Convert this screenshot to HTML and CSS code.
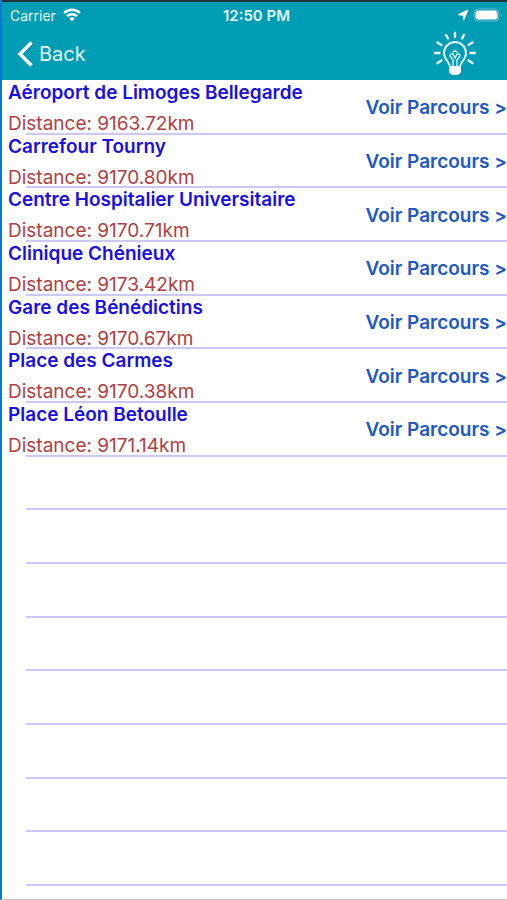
FILE: index.html
```html
<!DOCTYPE html>
<html lang="fr">
<head>
<meta charset="utf-8">
<meta name="viewport" content="width=device-width, initial-scale=1">
<title>Parcours</title>
<link rel="stylesheet" href="styles.css">
</head>
<body>
<header class="top">
  <div class="status">
    <div class="carrier">
      <span>Carrier</span>
      <svg width="20" height="14" viewBox="0 0 18 14" fill="none" stroke="#fff" stroke-width="2.4" aria-hidden="true">
        <path d="M1 5a11.500 11.500 0 0 1 16 0M4 8.200a7.200 7.200 0 0 1 10 0"/>
        <path d="M9 13.500 6.200 10.600a4 4 0 0 1 5.600 0z" fill="#fff" stroke="none"/>
      </svg>
    </div>
    <time class="clock">12:50 PM</time>
    <div class="indicators">
      <svg width="12" height="12" viewBox="0 0 12 12" fill="#fff" stroke="#fff" stroke-linejoin="round" aria-hidden="true"><path d="M11 1 6.700 11 6.200 6.200 1 5.700z"/></svg>
      <svg width="30" height="14" viewBox="0 0 30 14" aria-hidden="true">
        <rect x="1" y="1" width="25" height="12" rx="4" fill="none" stroke="#5fbecd"/>
        <rect x="2.500" y="2.500" width="22" height="9" rx="2.500" fill="#fff"/>
        <path d="M28 5q1.500 2 0 4z" fill="#7fcbd8"/>
      </svg>
    </div>
  </div>
  <nav class="bar">
    <a class="back" href="#">
      <svg width="16" height="26" viewBox="0 0 16 26" fill="none" stroke="#fff" stroke-width="3.400" aria-hidden="true"><path d="M14.500 1.500 3 13l11.500 11.500"/></svg>
      <span>Back</span>
    </a>
    <button class="bulb" type="button" aria-label="Lumière">
      <svg width="44" height="46" viewBox="0 0 44 46" fill="none" stroke="#e6f8fb" stroke-width="2" stroke-linecap="round" aria-hidden="true">
        <path d="M17 36c0-5-6-7-6-14a11 11 0 0 1 22 0c0 7-6 9-6 14z"/>
        <path d="M20 35v-6l-3-4q0-3 3-2l2 4 2-4q3-1 3 2l-3 4v6M20 21q2-2 4 0" stroke-width="1.300"/>
        <path d="M22 2v4M13 4l2 3.500M31 4l-2 3.500M4.500 11.500l4 2.500M39.500 11.500l-4 2.500M2 22h4.500M42 22h-4.500M4.500 32l4-2.500M39.500 32l-4-2.500" stroke-width="2.400"/>
        <path d="M16 36h12v4q0 4-6 4t-6-4z" fill="#fff" stroke="none"/>
      </svg>
    </button>
  </nav>
</header>
<main>
  <ul class="list">
    <li class="row"><div class="stop"><h2>Aéroport de Limoges Bellegarde</h2><p>Distance: 9163.72km</p></div><a href="#">Voir Parcours &gt;</a></li>
    <li class="row"><div class="stop"><h2>Carrefour Tourny</h2><p>Distance: 9170.80km</p></div><a href="#">Voir Parcours &gt;</a></li>
    <li class="row"><div class="stop"><h2>Centre Hospitalier Universitaire</h2><p>Distance: 9170.71km</p></div><a href="#">Voir Parcours &gt;</a></li>
    <li class="row"><div class="stop"><h2>Clinique Chénieux</h2><p>Distance: 9173.42km</p></div><a href="#">Voir Parcours &gt;</a></li>
    <li class="row"><div class="stop"><h2>Gare des Bénédictins</h2><p>Distance: 9170.67km</p></div><a href="#">Voir Parcours &gt;</a></li>
    <li class="row"><div class="stop"><h2>Place des Carmes</h2><p>Distance: 9170.38km</p></div><a href="#">Voir Parcours &gt;</a></li>
    <li class="row"><div class="stop"><h2>Place Léon Betoulle</h2><p>Distance: 9171.14km</p></div><a href="#">Voir Parcours &gt;</a></li>
    <li class="row" aria-hidden="true"></li>
    <li class="row" aria-hidden="true"></li>
    <li class="row" aria-hidden="true"></li>
    <li class="row" aria-hidden="true"></li>
    <li class="row" aria-hidden="true"></li>
    <li class="row" aria-hidden="true"></li>
    <li class="row" aria-hidden="true"></li>
    <li class="row" aria-hidden="true"></li>
  </ul>
</main>
</body>
</html>
```

FILE: styles.css
```css
* {
  box-sizing: border-box;
}

body {
  display: flex;
  flex-direction: column;
  min-height: 100vh;
  margin: 0;
  border-left: 2px solid #0a78d8;
  border-bottom: 1px solid #c4c4c4;
  background: #fff;
  font-family: Inter, "Liberation Sans", sans-serif;
}

.top {
  border-top: 2px solid #26323a;
  background: #009db5;
  color: #e0f6fa;
}

.status {
  display: grid;
  grid-template-columns: 1fr auto 1fr;
  align-items: center;
  height: 26px;
  padding: 0 4px 0 8px;
  font-size: 14px;
}

.carrier,
.indicators {
  display: flex;
  align-items: center;
  gap: 6px;
}

.indicators {
  justify-content: flex-end;
  gap: 4px;
}

.clock {
  font-size: 15px;
  font-weight: 600;
}

.bar {
  display: flex;
  align-items: center;
  justify-content: space-between;
  height: 52px;
  padding: 0 30px 0 15px;
}

.back {
  display: flex;
  align-items: center;
  gap: 6px;
  color: inherit;
  font-size: 20px;
  text-decoration: none;
}

.bulb {
  display: flex;
  padding: 0;
  border: 0;
  background: none;
}

main {
  display: flex;
  flex: 1;
}

.list {
  display: grid;
  flex: 1;
  grid-auto-rows: 1fr;
  margin: 0;
  padding: 1px 0 13px;
  list-style: none;
}

.row {
  position: relative;
  display: flex;
  align-items: center;
  justify-content: space-between;
  padding-left: 6px;
}

.row::after {
  position: absolute;
  right: 0;
  bottom: 0;
  left: 24px;
  border-bottom: 2px solid #ccc8f8;
  content: "";
}

.stop {
  align-self: flex-start;
}

.stop h2,
.stop p,
.row a {
  margin: 0;
  font-size: 19px;
}

.stop h2 {
  color: #1a10e0;
  font-weight: 600;
  line-height: 24px;
}

.stop p {
  margin-top: 9px;
  color: #b04040;
  line-height: 20px;
}

.row a {
  color: #2058c4;
  font-weight: 600;
  text-decoration: none;
}
```
